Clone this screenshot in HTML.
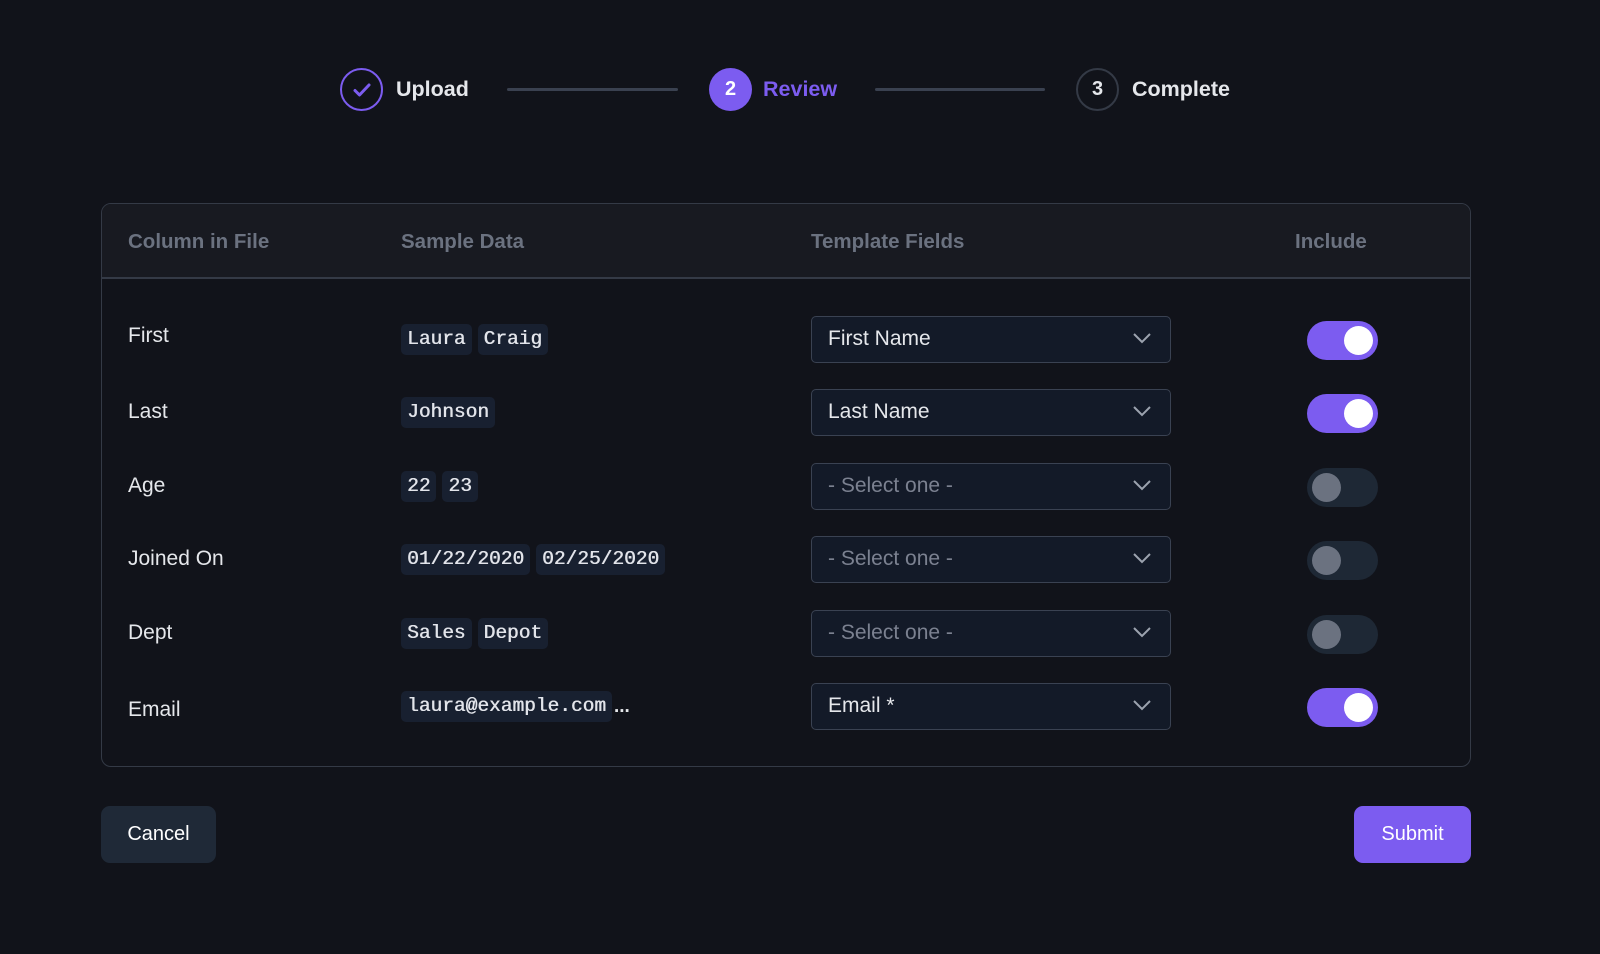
<!DOCTYPE html>
<html><head><meta charset="utf-8"><style>
*{box-sizing:border-box;margin:0;padding:0}
body{width:1600px;height:954px;background:#11131a;font-family:"Liberation Sans",sans-serif;color:#e5e7eb;position:relative;overflow:hidden}
.circ{position:absolute;width:43px;height:43px;border-radius:50%;top:68px;display:flex;align-items:center;justify-content:center;font-size:20px;font-weight:bold}
.stxt{position:absolute;top:76px;font-size:21.5px;font-weight:bold;line-height:26px}
.line{position:absolute;top:88px;height:3px;background:#3a4150;border-radius:2px}
.tbl{position:absolute;left:101px;top:203px;width:1370px;height:564px;border:1.5px solid #343a46;border-radius:10px;overflow:hidden}
.hdr{position:absolute;left:0;top:0;right:0;height:75px;background:#181a21;border-bottom:2px solid #343a46}
.h{position:absolute;top:26px;font-size:20.5px;font-weight:bold;color:#6b7280}
.lab{position:absolute;left:26px;font-size:21px;color:#e5e7eb}
.tags{position:absolute;left:299px;display:flex;gap:6px;align-items:center}
.tag{background:#182030;border-radius:5px;padding:0 6px;height:31px;line-height:31px;font-family:"Liberation Mono",monospace;font-size:19.5px;color:#e2e4ea;text-shadow:0.5px 0 0 #e2e4ea}
.sel{position:absolute;left:709px;width:360px;height:47px;background:#131a28;border:1.5px solid #3a4252;border-radius:5px;font-size:21px;line-height:44px;padding-left:16px;color:#e5e7eb}
.sel.ph{color:#7b8190}
.sel svg{position:absolute;right:18px;top:15px}
.tg{position:absolute;left:1205px;width:71px;height:39px;border-radius:20px}
.tg.on{background:#7c5cf0}.tg.off{background:#1e2835}
.tg i{position:absolute;top:5px;width:29px;height:29px;border-radius:50%}
.tg.on i{right:5px;background:#fff}.tg.off i{left:5px;background:#6b7280}
.btn{position:absolute;top:806px;height:57px;border-radius:9px;font-size:20px;line-height:57px;text-align:center;color:#fff}
</style></head><body>
<div class="circ" style="left:340px;border:2px solid #7c5cf0">
<svg width="22" height="22" viewBox="0 0 22 22"><path d="M4 11.5l4.5 4.5L18 6" fill="none" stroke="#7c5cf0" stroke-width="3" stroke-linecap="round" stroke-linejoin="round"/></svg></div>
<div class="stxt" style="left:396px">Upload</div>
<div class="line" style="left:507px;width:171px"></div>
<div class="circ" style="left:709px;background:#7c5cf0;color:#fff">2</div>
<div class="stxt" style="left:763px;color:#7c5cf0">Review</div>
<div class="line" style="left:875px;width:170px"></div>
<div class="circ" style="left:1076px;border:2px solid #343a46;color:#e5e7eb">3</div>
<div class="stxt" style="left:1132px">Complete</div>

<div class="tbl">
<div class="hdr">
<div class="h" style="left:26px">Column in File</div>
<div class="h" style="left:299px">Sample Data</div>
<div class="h" style="left:709px">Template Fields</div>
<div class="h" style="left:1193px">Include</div>
</div>

<div class="lab" style="top:120px">First</div>
<div class="tags" style="top:120px"><span class="tag">Laura</span><span class="tag">Craig</span></div>
<div class="sel" style="top:112px">First Name<svg width="20" height="12" viewBox="0 0 20 12"><path d="M2 2l8 8 8-8" fill="none" stroke="#9ca3af" stroke-width="2"/></svg></div>
<div class="tg on" style="top:117px"><i></i></div>

<div class="lab" style="top:196px">Last</div>
<div class="tags" style="top:193px"><span class="tag">Johnson</span></div>
<div class="sel" style="top:185px">Last Name<svg width="20" height="12" viewBox="0 0 20 12"><path d="M2 2l8 8 8-8" fill="none" stroke="#9ca3af" stroke-width="2"/></svg></div>
<div class="tg on" style="top:190px"><i></i></div>

<div class="lab" style="top:270px">Age</div>
<div class="tags" style="top:267px"><span class="tag">22</span><span class="tag">23</span></div>
<div class="sel ph" style="top:259px">- Select one -<svg width="20" height="12" viewBox="0 0 20 12"><path d="M2 2l8 8 8-8" fill="none" stroke="#9ca3af" stroke-width="2"/></svg></div>
<div class="tg off" style="top:264px"><i></i></div>

<div class="lab" style="top:343px">Joined On</div>
<div class="tags" style="top:340px"><span class="tag">01/22/2020</span><span class="tag">02/25/2020</span></div>
<div class="sel ph" style="top:332px">- Select one -<svg width="20" height="12" viewBox="0 0 20 12"><path d="M2 2l8 8 8-8" fill="none" stroke="#9ca3af" stroke-width="2"/></svg></div>
<div class="tg off" style="top:337px"><i></i></div>

<div class="lab" style="top:417px">Dept</div>
<div class="tags" style="top:414px"><span class="tag">Sales</span><span class="tag">Depot</span></div>
<div class="sel ph" style="top:406px">- Select one -<svg width="20" height="12" viewBox="0 0 20 12"><path d="M2 2l8 8 8-8" fill="none" stroke="#9ca3af" stroke-width="2"/></svg></div>
<div class="tg off" style="top:411px"><i></i></div>

<div class="lab" style="top:494px">Email</div>
<div class="tags" style="top:487px"><span class="tag">laura@example.com</span><span style="font-size:19px;margin-left:-4px;font-weight:bold">...</span></div>
<div class="sel" style="top:479px">Email *<svg width="20" height="12" viewBox="0 0 20 12"><path d="M2 2l8 8 8-8" fill="none" stroke="#9ca3af" stroke-width="2"/></svg></div>
<div class="tg on" style="top:484px"><i></i></div>
</div>

<div class="btn" style="left:101px;width:115px;background:#1f2937">Cancel</div>
<div class="btn" style="left:1354px;width:117px;background:#7c5cf0">Submit</div>
</body></html>
